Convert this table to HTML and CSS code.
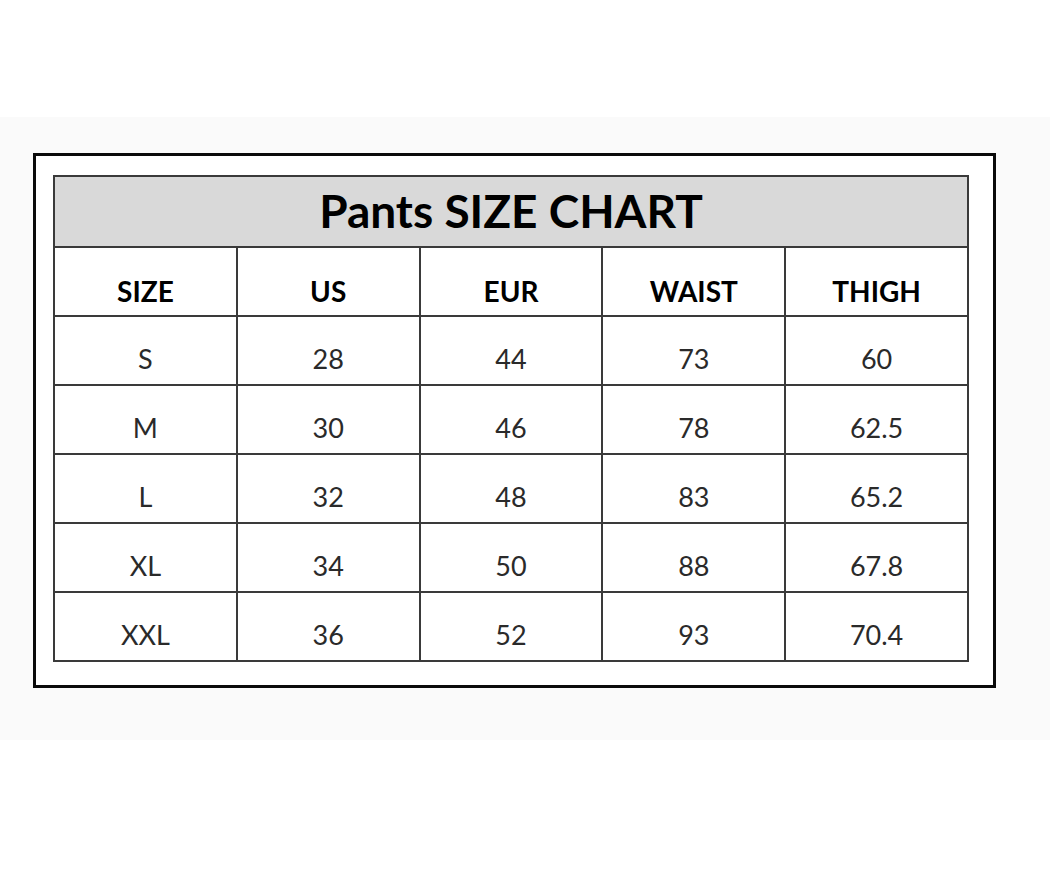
FILE: index.html
```html
<!DOCTYPE html>
<html>
<head>
<meta charset="utf-8">
<link rel="stylesheet" href="styles.css">
</head>
<body>
<div class="band">
  <div class="frame">
    <table class="chart">
      <tr><th colspan="5" class="title">Pants SIZE CHART</th></tr>
      <tr class="head"><th>SIZE</th><th>US</th><th>EUR</th><th>WAIST</th><th>THIGH</th></tr>
      <tr><td>S</td><td>28</td><td>44</td><td>73</td><td>60</td></tr>
      <tr><td>M</td><td>30</td><td>46</td><td>78</td><td>62.5</td></tr>
      <tr><td>L</td><td>32</td><td>48</td><td>83</td><td>65.2</td></tr>
      <tr><td>XL</td><td>34</td><td>50</td><td>88</td><td>67.8</td></tr>
      <tr><td>XXL</td><td>36</td><td>52</td><td>93</td><td>70.4</td></tr>
    </table>
  </div>
</div>
</body>
</html>
```

FILE: styles.css
```css
html, body {
  margin: 0;
  padding: 0;
  background: #ffffff;
}
body {
  padding-top: 117px;
  font-family: Lato, "Open Sans", sans-serif;
}
.band {
  background: #fafafa;
  height: 623px;
  padding-top: 36px;
  box-sizing: border-box;
}
.frame {
  margin-left: 33px;
  width: 963px;
  height: 535px;
  box-sizing: border-box;
  border: 3px solid #0a0a0a;
  background: #fff;
  padding: 19px 0 0 17px;
}
.chart {
  border-collapse: collapse;
  width: 916px;
  table-layout: fixed;
}
.chart th, .chart td {
  border: 2px solid #3a3a3a;
  text-align: center;
  padding: 0;
  line-height: 1;
  color: #1a1a1a;
}
.chart .title {
  background: #d9d9d9;
  height: 67px;
  padding-bottom: 2px;
  font-size: 46px;
  font-weight: 700;
  color: #000;
}
.chart .head th {
  height: 48px;
  padding-top: 19px;
  font-size: 28px;
  font-weight: 700;
  color: #000;
}
.chart td {
  height: 51px;
  padding-top: 16px;
  font-size: 27px;
  font-weight: 400;
  color: #2a2a2a;
}
```
